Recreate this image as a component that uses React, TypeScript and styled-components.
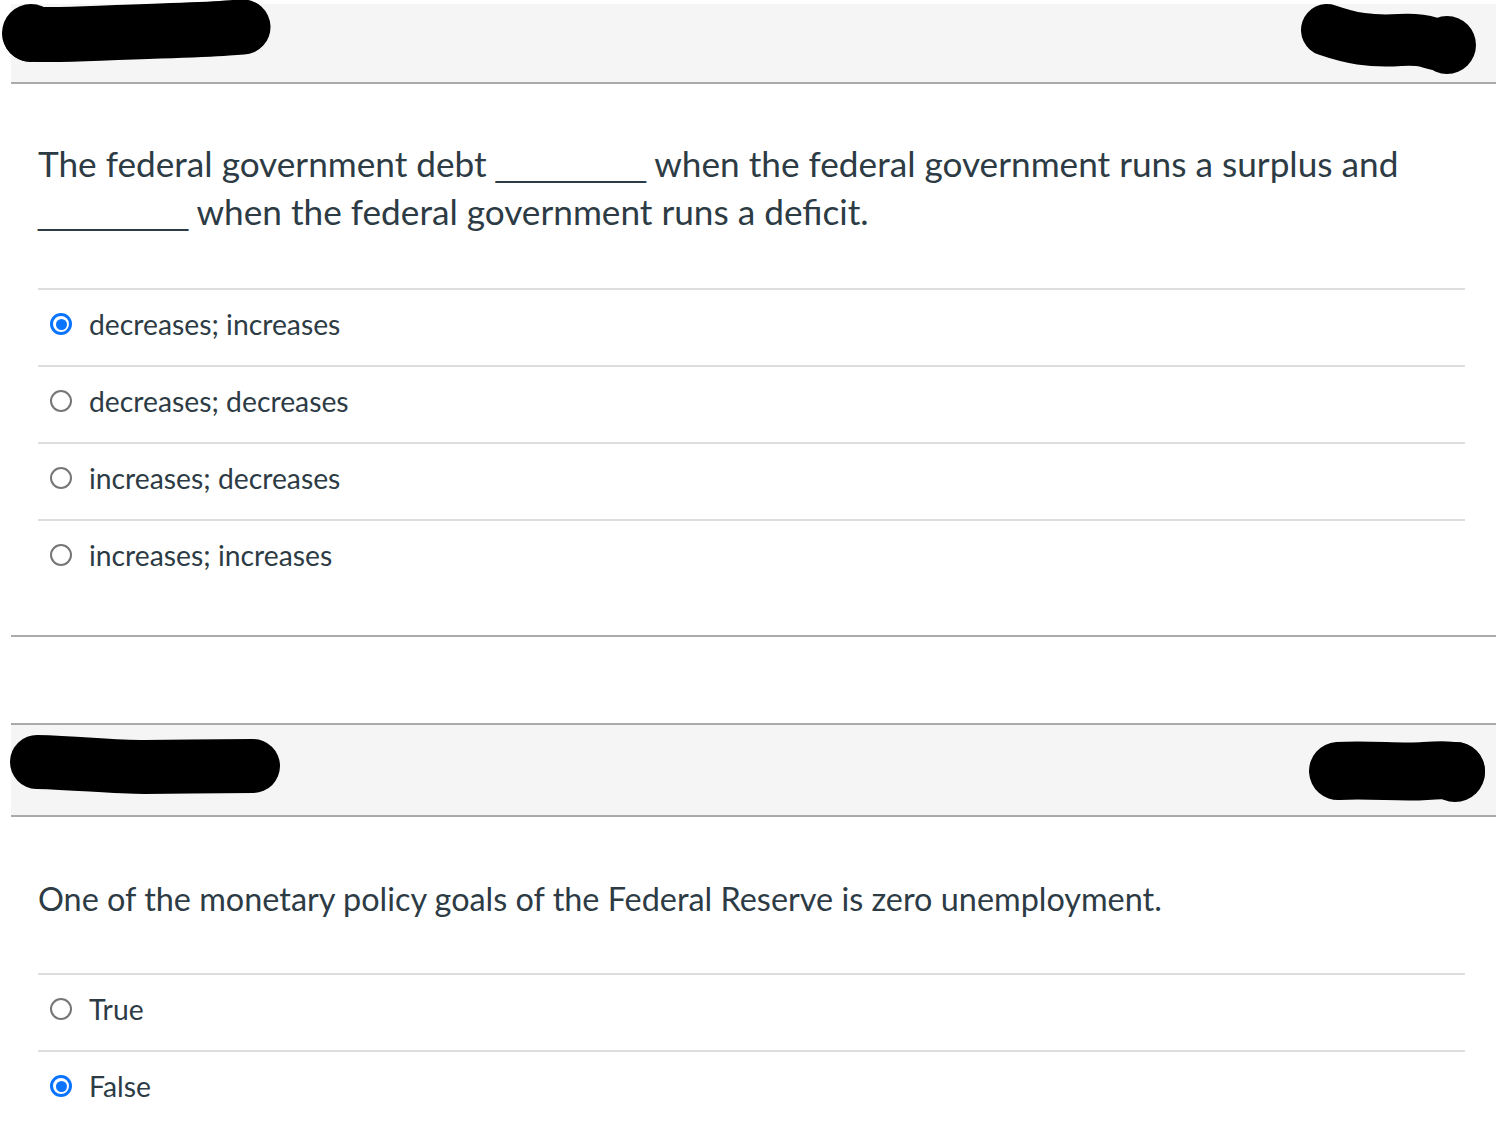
import React from "react";
import styled, { createGlobalStyle } from "styled-components";

const Global = createGlobalStyle`
  html, body { margin: 0; padding: 0; background: #ffffff; }
  body { font-family: Lato, "Open Sans", "Liberation Sans", sans-serif; color: #2d3b45; }
  * { box-sizing: border-box; }
`;

const Page = styled.div`
  width: 1496px;
  height: 1140px;
  overflow: hidden;
  padding: 4px 0 0 11px;
`;

const Card = styled.section<{ $top?: boolean; $gap?: number }>`
  border-top: ${(p) => (p.$top ? "2px solid #aaaaaa" : "none")};
  border-bottom: 2px solid #aaaaaa;
  margin-top: ${(p) => p.$gap ?? 0}px;
`;

const Header = styled.header<{ $h: number }>`
  position: relative;
  height: ${(p) => p.$h}px;
  background: #f5f5f5;
  border-bottom: 2px solid #aaaaaa;
`;

const Redact = styled.svg<{ $l: number; $t: number }>`
  position: absolute;
  left: ${(p) => p.$l}px;
  top: ${(p) => p.$t}px;
  overflow: visible;
`;

const Body = styled.div<{ $pt: number; $pb: number }>`
  padding: ${(p) => p.$pt}px 31px ${(p) => p.$pb}px 27px;
`;

const QuestionText = styled.p<{ $size: number; $mb: number }>`
  margin: 0 0 ${(p) => p.$mb}px 0;
  font-size: ${(p) => p.$size}px;
  line-height: 48px;
  color: #2d3b45;
  max-width: 1420px;
`;

const Blank = styled.span`
  font-family: "Liberation Sans", Arial, sans-serif;
  font-size: 30px;
  line-height: 0;
`;

const Answers = styled.div`
  display: flex;
  flex-direction: column;
`;

const AnswerRow = styled.label`
  display: flex;
  align-items: center;
  gap: 17px;
  height: 77px;
  padding: 0 0 7px 12px;
  border-top: 2px solid #dddddd;
  font-size: 28.3px;
  color: #2d3b45;
`;

const Radio = styled.span<{ $on: boolean }>`
  position: relative;
  flex: none;
  width: 22px;
  height: 22px;
  border-radius: 50%;
  border: ${(p) => (p.$on ? "3px solid #0b74ff" : "2px solid #767676")};
  background: #ffffff;
  &::after {
    content: "";
    display: ${(p) => (p.$on ? "block" : "none")};
    position: absolute;
    left: 2.5px;
    top: 2.5px;
    width: 11px;
    height: 11px;
    border-radius: 50%;
    background: #0b74ff;
  }
`;

type BlobProps = { l: number; t: number; w: number; h: number; d: string; sw: number; extra?: React.ReactNode };

const Blob = ({ l, t, w, h, d, sw, extra }: BlobProps) => (
  <Redact $l={l} $t={t} width={w} height={h} viewBox={`0 0 ${w} ${h}`}>
    <path d={d} fill="none" stroke="#000" strokeWidth={sw} strokeLinecap="round" strokeLinejoin="round" />
    {extra}
  </Redact>
);

const Answer = ({ on, children }: { on?: boolean; children: React.ReactNode }) => (
  <AnswerRow>
    <Radio $on={!!on} />
    <span>{children}</span>
  </AnswerRow>
);

export default function App() {
  return (
    <Page>
      <Global />
      <Card>
        <Header $h={80}>
          <Blob l={-11} t={-4} w={290} h={80} sw={55}
            d="M 30 34 C 60 36, 90 33, 160 31 S 220 28, 243 27"
            extra={<circle cx={31} cy={33} r={29} fill="#000" />} />
          <Blob l={1289} t={-4} w={200} h={90} sw={52}
            d="M 27 30 C 50 38, 70 42, 100 40 S 130 46, 147 45"
            extra={<circle cx={147} cy={45} r={29} fill="#000" />} />
        </Header>
        <Body $pt={55} $pb={39}>
          <QuestionText $size={35.2} $mb={53}>
            The federal government debt <Blank>_________</Blank> when the federal government runs a surplus and{" "}
            <Blank>_________</Blank> when the federal government runs a deficit.
          </QuestionText>
          <Answers>
            <Answer on>decreases; increases</Answer>
            <Answer>decreases; decreases</Answer>
            <Answer>increases; decreases</Answer>
            <Answer>increases; increases</Answer>
          </Answers>
        </Body>
      </Card>
      <Card $top $gap={86}>
        <Header $h={92}>
          <Blob l={-11} t={-6} w={300} h={90} sw={54}
            d="M 37 43 C 80 44, 110 48, 145 48 S 220 47, 253 47" />
          <Blob l={1289} t={-6} w={210} h={90} sw={58}
            d="M 38 52 C 70 50, 100 54, 125 52 S 145 52, 156 52"
            extra={<circle cx={155} cy={53} r={30} fill="#000" />} />
        </Header>
        <Body $pt={58} $pb={20}>
          <QuestionText $size={32.4} $mb={50}>
            One of the monetary policy goals of the Federal Reserve is zero unemployment.
          </QuestionText>
          <Answers>
            <Answer>True</Answer>
            <Answer on>False</Answer>
          </Answers>
        </Body>
      </Card>
    </Page>
  );
}
